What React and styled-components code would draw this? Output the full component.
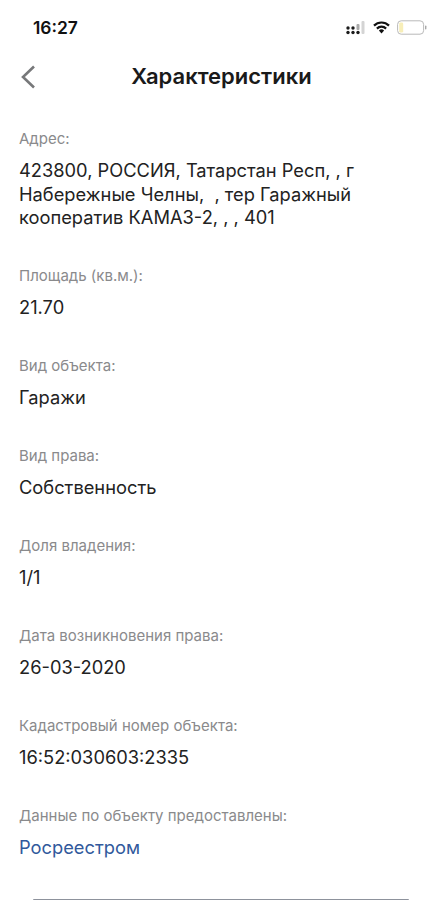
import React from "react";
import styled, { createGlobalStyle } from "styled-components";

const GlobalStyle = createGlobalStyle`
  html, body {
    margin: 0;
    padding: 0;
    background: #fff;
  }
  body {
    font-family: Inter, "Liberation Sans", sans-serif;
    overflow: hidden;
  }
`;

const Screen = styled.div`
  width: 443px;
  height: 900px;
  display: flex;
  flex-direction: column;
  overflow: hidden;
  background: #fff;
`;

const StatusBar = styled.div`
  height: 56px;
  padding: 0 16px 1px 33px;
  box-sizing: border-box;
  display: flex;
  align-items: center;
  justify-content: space-between;
`;

const Clock = styled.span`
  font-size: 17.4px;
  font-weight: 600;
  color: #111;
`;

const StatusIcons = styled.div`
  display: flex;
  align-items: center;
  gap: 7px;
`;

const NavBar = styled.div`
  height: 42px;
  padding-bottom: 2px;
  box-sizing: border-box;
  position: relative;
  display: flex;
  align-items: center;
  justify-content: center;
`;

const BackButton = styled.svg`
  position: absolute;
  left: 20px;
  top: 9px;
`;

const Title = styled.h1`
  margin: 0;
  font-size: 22px;
  font-weight: 600;
  color: #1a1a1a;
`;

const List = styled.div`
  display: flex;
  flex-direction: column;
  gap: 36.33px;
  padding: 31px 19px 0;
`;

const Field = styled.div`
  display: flex;
  flex-direction: column;
  gap: 10px;
`;

const Label = styled.div`
  font-size: 15px;
  line-height: 20px;
  color: #8a8a8c;
`;

const Value = styled.div`
  font-size: 18.3px;
  line-height: 23.67px;
  white-space: pre-wrap;
  color: ${({ $link }) => ($link ? "#31599c" : "#222")};
`;

const BottomEdge = styled.div`
  margin: auto 34px 0 33px;
  height: 1.5px;
  background: #8d929c;
  border-radius: 2px 2px 0 0;
`;

const fields = [
  {
    label: "Адрес:",
    value: "423800, РОССИЯ, Татарстан Респ, , г Набережные Челны,  , тер Гаражный кооператив КАМАЗ-2, , , 401",
  },
  { label: "Площадь (кв.м.):", value: "21.70" },
  { label: "Вид объекта:", value: "Гаражи" },
  { label: "Вид права:", value: "Собственность" },
  { label: "Доля владения:", value: "1/1" },
  { label: "Дата возникновения права:", value: "26-03-2020" },
  { label: "Кадастровый номер объекта:", value: "16:52:030603:2335" },
  { label: "Данные по объекту предоставлены:", value: "Росреестром", link: true },
];

const SignalIcon = () => (
  <svg width="20" height="15" viewBox="0 0 20 15">
    <g fill="#1b1b1b">
      <circle cx="2" cy="8" r="1.7" />
      <circle cx="2" cy="12.5" r="1.7" />
      <circle cx="7" cy="8" r="1.7" />
      <circle cx="7" cy="12.5" r="1.7" />
      <circle cx="12" cy="12.5" r="1.7" />
    </g>
    <rect x="10.5" y="4" width="3" height="6" rx="1" fill="#aaa" />
    <rect x="15.5" y="1" width="3" height="13" rx="1" fill="#d4d4d4" />
  </svg>
);

const WifiIcon = () => (
  <svg width="17" height="13" viewBox="0 0 17 13">
    <path d="M1 4.6a10.6 10.6 0 0 1 15 0" fill="none" stroke="#111" strokeWidth="2.2" />
    <path d="M3.9 7.6a6.5 6.5 0 0 1 9.2 0" fill="none" stroke="#111" strokeWidth="2.2" />
    <path d="M5.9 9.6a3.7 3.7 0 0 1 5.2 0L8.5 12.6z" fill="#111" />
  </svg>
);

const BatteryIcon = () => (
  <svg width="30" height="15" viewBox="0 0 30 15">
    <rect x="0.6" y="0.8" width="26" height="13.4" rx="3.6" fill="#fff" stroke="#b9b9b9" />
    <rect x="2.2" y="2.4" width="4" height="10.2" rx="1.4" fill="#f7eeb8" />
    <rect x="28" y="5.5" width="1.4" height="4" rx="0.7" fill="#a8a8a8" />
  </svg>
);

export default function App() {
  return (
    <Screen>
      <GlobalStyle />
      <StatusBar>
        <Clock>16:27</Clock>
        <StatusIcons>
          <SignalIcon />
          <WifiIcon />
          <BatteryIcon />
        </StatusIcons>
      </StatusBar>
      <NavBar>
        <BackButton width="16" height="24" viewBox="0 0 16 24">
          <path d="M14 1.5 3 12l11 10.5" fill="none" stroke="#77787a" strokeWidth="2.6" />
        </BackButton>
        <Title>Характеристики</Title>
      </NavBar>
      <List>
        {fields.map((f) => (
          <Field key={f.label}>
            <Label>{f.label}</Label>
            <Value $link={f.link}>{f.value}</Value>
          </Field>
        ))}
      </List>
      <BottomEdge />
    </Screen>
  );
}
